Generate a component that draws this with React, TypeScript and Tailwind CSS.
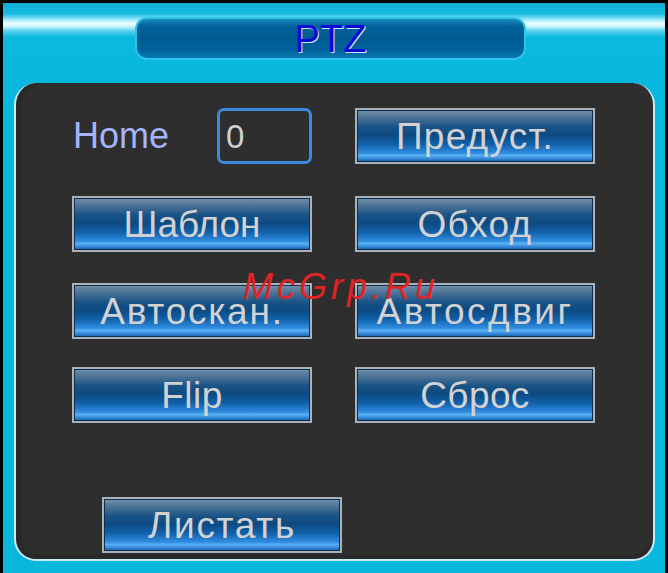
import React from "react";

const font = { fontFamily: '"Liberation Sans", Arial, sans-serif' };

function Btn({
  label,
  className = "",
  textClass = "",
}: {
  label: string;
  className?: string;
  textClass?: string;
}) {
  return (
    <div
      className={
        "h-[56px] w-[240px] border-2 border-[#a9b1b9] bg-[#0f2f4c] p-px " + className
      }
    >
      <div className="flex h-full w-full items-center justify-center bg-[linear-gradient(to_bottom,#6f8ea8_0%,#4a7195_14%,#1a5386_32%,#0c4a82_48%,#1160a8_66%,#2f8ce0_84%,#5aaef2_89%,#3b92e2_94%,#1d66ad_100%)]">
        <span className={"text-[37px] leading-none text-[#d2d2d2] " + textClass} style={font}>
          {label}
        </span>
      </div>
    </div>
  );
}

export default function App() {
  return (
    <div className="relative h-[573px] w-[668px] overflow-hidden bg-black px-[3px] pt-[3px]" style={font}>
      <div className="flex h-[570px] flex-col bg-[#07b7dc]">
        <div className="h-[80px] shrink-0 bg-[linear-gradient(to_bottom,#0eaed6_0px,#16bce2_11px,#8fe6f8_16px,#eafdff_20px,#d6f8ff_23px,#56d2f0_28px,#0bb9de_34px,#07b7dc_100%)] pl-[132px] pt-[14px]">
          <div className="flex h-[43px] w-[391px] items-center justify-center rounded-[12px] border-2 border-[#2cc4e6] bg-[linear-gradient(to_bottom,#1a8cbc_0%,#03629a_18%,#005a92_50%,#00639c_80%,#0a78b0_100%)]">
            <span className="text-[38px] leading-none text-[#0a0ad8] [text-shadow:1px_1px_0_#cfe8ff]">PTZ</span>
          </div>
        </div>
        <div className="ml-[11px] mr-[10px] h-[478px] rounded-[22px] border-x-2 border-b-2 border-t-0 border-[#cdeaf3] bg-[#2e2e2e] pl-[56px] pt-[25px] shadow-[inset_6px_0_0_#292929,inset_0_-5px_0_#292929]">
          <div className="grid grid-cols-[240px_240px] gap-x-[43px]">
            <div className="flex h-[56px] items-center">
              <span className="w-[145px] pl-px text-[36px] leading-none text-[#a3b4fa]">Home</span>
              <div className="flex h-[56px] w-[95px] items-center rounded-[7px] border-[3px] border-[#3a8be0] pl-[6px]">
                <span className="text-[33px] leading-none text-[#d0d0d0]">0</span>
              </div>
            </div>
            <Btn label="Предуст." textClass="tracking-[1.2px]" />
            <Btn label="Шаблон" className="mt-[32px]" />
            <Btn label="Обход" className="mt-[32px]" textClass="tracking-[1.4px]" />
            <Btn label="Автоскан." className="mt-[31px]" textClass="tracking-[1.8px]" />
            <Btn label="Автосдвиг" className="mt-[31px]" textClass="tracking-[2.5px]" />
            <Btn label="Flip" className="mt-[28px]" textClass="tracking-[0.5px]" />
            <Btn label="Сброс" className="mt-[28px]" textClass="tracking-[0.4px]" />
          </div>
          <Btn label="Листать" className="ml-[30px] mt-[74px]" textClass="tracking-[1.7px]" />
        </div>
      </div>
      <div className="pointer-events-none absolute left-[243px] top-[269px] text-[36px] italic leading-none tracking-[4px] text-[#e02424]">
        McGrp.Ru
      </div>
    </div>
  );
}
